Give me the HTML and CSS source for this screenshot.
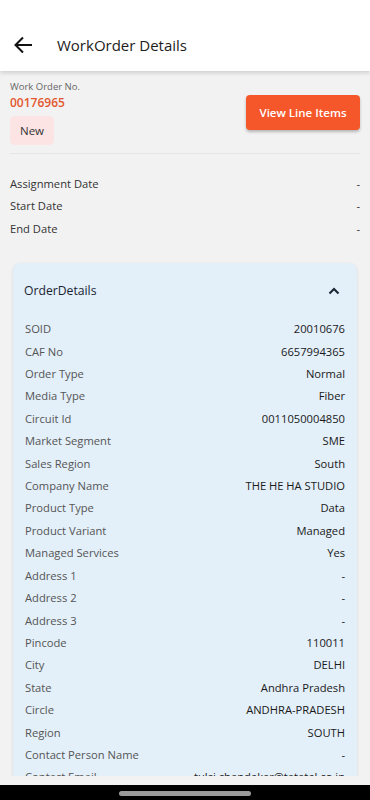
FILE: index.html
```html
<!DOCTYPE html>
<html>
<head>
  <title>WorkOrder Details</title>
  <link rel="stylesheet" href="styles.css">
</head>
<body>
  <div class="screen">
    <div class="header">
      <svg class="back" width="20" height="20" viewBox="0 0 20 20">
        <path d="M19 10H2.5M10 2.5L2.5 10L10 17.5" fill="none" stroke="#111" stroke-width="2"/>
      </svg>
      <span class="title">WorkOrder Details</span>
    </div>

    <div class="content">
      <div class="summary">
        <div class="wo-info">
          <div class="wo-label">Work Order No.</div>
          <div class="wo-number">00176965</div>
          <span class="badge">New</span>
        </div>
        <button class="btn">View Line Items</button>
      </div>

      <div class="dates">
        <div class="row"><span>Assignment Date</span><span>-</span></div>
        <div class="row"><span>Start Date</span><span>-</span></div>
        <div class="row"><span>End Date</span><span>-</span></div>
      </div>

      <div class="card">
        <div class="card-head">
          <span>OrderDetails</span>
          <svg width="12" height="8" viewBox="0 0 12 8">
            <path d="M1.5 6.5L6 2L10.5 6.5" fill="none" stroke="#1a2433" stroke-width="2"/>
          </svg>
        </div>
        <div class="card-body" id="details"></div>
      </div>
    </div>

    <div class="gap"></div>
    <div class="navbar"><div class="pill"></div></div>
  </div>

  <script>
    const details = [
      ['SOID', '20010676'],
      ['CAF No', '6657994365'],
      ['Order Type', 'Normal'],
      ['Media Type', 'Fiber'],
      ['Circuit Id', '0011050004850'],
      ['Market Segment', 'SME'],
      ['Sales Region', 'South'],
      ['Company Name', 'THE HE HA STUDIO'],
      ['Product Type', 'Data'],
      ['Product Variant', 'Managed'],
      ['Managed Services', 'Yes'],
      ['Address 1', '-'],
      ['Address 2', '-'],
      ['Address 3', '-'],
      ['Pincode', '110011'],
      ['City', 'DELHI'],
      ['State', 'Andhra Pradesh'],
      ['Circle', 'ANDHRA-PRADESH'],
      ['Region', 'SOUTH'],
      ['Contact Person Name', '-'],
      ['Contact Email', 'tulsi.chandekar@tatatel.co.in']
    ];

    const box = document.getElementById('details');
    details.forEach(([label, value]) => {
      const row = document.createElement('div');
      row.className = 'row';
      row.innerHTML = `<span class="label">${label}</span><span class="value">${value}</span>`;
      box.appendChild(row);
    });
  </script>
</body>
</html>
```

FILE: styles.css
```css
body {
  margin: 0;
  padding: 0;
  background-color: #f2f2f2;
  font-family: "Open Sans", "Liberation Sans", sans-serif;
  color: #222;
}

.screen {
  width: 370px;
  height: 800px;
  display: flex;
  flex-direction: column;
  overflow: hidden;
}

.header {
  height: 71px;
  flex-shrink: 0;
  background: white;
  display: flex;
  align-items: center;
  padding: 0 13px;
  padding-top: 18px;
  box-sizing: border-box;
  box-shadow: 0 2px 4px rgba(0, 0, 0, 0.15);
  position: relative;
  z-index: 1;
}

.back {
  margin-right: 24px;
}

.title {
  font-size: 15px;
  font-weight: 500;
  color: #1c1c1c;
}

.content {
  height: 705px;
  flex-shrink: 0;
  overflow: hidden;
}

.summary {
  display: flex;
  justify-content: space-between;
  align-items: center;
  margin: 0 10px;
  padding: 9px 0 8px;
  border-bottom: 1px solid #e6e6e6;
}

.wo-label {
  font-size: 9.5px;
  color: #666;
  line-height: 14px;
}

.wo-number {
  font-size: 12px;
  font-weight: 600;
  color: #e4572e;
  line-height: 18px;
  margin-bottom: 4px;
}

.badge {
  display: inline-block;
  background: #fce4e4;
  border-radius: 5px;
  padding: 0 10px;
  font-size: 11.5px;
  line-height: 29px;
  color: #333;
}

.btn {
  width: 114px;
  height: 35px;
  background: #f5562a;
  border: none;
  border-radius: 4px;
  color: white;
  font-family: inherit;
  font-size: 11.5px;
  font-weight: 600;
  box-shadow: 0 2px 3px rgba(0, 0, 0, 0.25);
  cursor: pointer;
}

.dates {
  padding: 19px 10px 23px;
}

.row {
  display: flex;
  justify-content: space-between;
  font-size: 11.2px;
  line-height: 22.4px;
  color: #333;
  white-space: nowrap;
}

.card {
  margin: 0 13px;
  background: #e3eff9;
  border-radius: 8px;
  box-shadow: 0 1px 3px rgba(0, 0, 0, 0.12);
}

.card-head {
  display: flex;
  justify-content: space-between;
  align-items: center;
  padding: 17px 17px 17px 11px;
  line-height: 21px;
  font-size: 12.2px;
  font-weight: 500;
  color: #1a2433;
}

.card-body {
  padding: 0 12px 12px;
}

.label {
  color: #555;
}

.value {
  color: #1a1a1a;
  font-weight: 500;
}

.gap {
  height: 9px;
  flex-shrink: 0;
}

.navbar {
  flex: 1;
  background: black;
  display: flex;
  justify-content: center;
  padding-top: 6px;
}

.pill {
  width: 132px;
  height: 5px;
  border-radius: 3px;
  background: #9a9a9a;
}
```
